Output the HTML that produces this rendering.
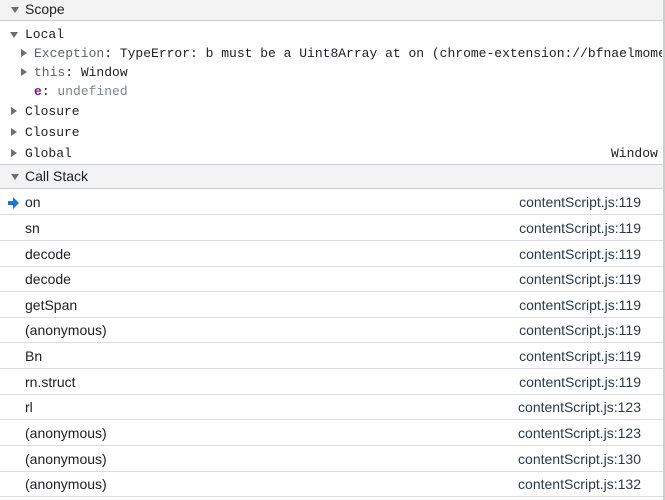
<!DOCTYPE html>
<html><head><style>
body{margin:0;width:665px;height:500px;overflow:hidden;background:#fff;font-family:"Liberation Sans",sans-serif;font-size:14px;color:#202124;position:relative}
.hdr{position:absolute;left:0;width:663px;height:21px;background:#f3f3f3;border-bottom:1px solid #cacdd1;border-top:1px solid #cacdd1;box-sizing:border-box}
.hdr span{position:absolute;left:25px;top:1px;font-size:14px}
.tri{position:absolute;width:0;height:0}
.down{border-left:4px solid transparent;border-right:4px solid transparent;border-top:6px solid #6e6e6e}
.right{border-top:4px solid transparent;border-bottom:4px solid transparent;border-left:6px solid #6e6e6e}
.m{position:absolute;font-family:"Liberation Mono",monospace;font-size:13px;white-space:nowrap}
.row{position:absolute;left:0;width:663px;height:26px;border-bottom:1px solid #dadce0;box-sizing:border-box}
.row .n{position:absolute;left:25px;top:5px}
.row .f{position:absolute;right:22px;top:5px;color:#303942}
.vr{position:absolute;right:0;top:0;width:2px;height:500px;background:#cacdd1}
</style></head><body>
<div class="hdr" style="top:-1px;height:22px"><span style="top:1px">Scope</span><div class="tri down" style="left:11px;top:7px"></div></div>
<div class="tri down" style="left:10px;top:32px"></div><div class="m" style="left:25px;top:27px">Local</div>
<div class="tri right" style="left:21px;top:49px"></div><div class="m" style="left:34px;top:46px;width:628px;overflow:hidden"><span style="color:#5f6368">Exception</span>: TypeError: b must be a Uint8Array at on (chrome-extension://bfnaelmomeimhlpmgjnjophhpkkoljpa/</div>
<div class="tri right" style="left:21px;top:68px"></div><div class="m" style="left:34px;top:65px"><span style="color:#5f6368">this</span>: Window</div>
<div class="m" style="left:34px;top:84px"><span style="color:#881280;font-weight:bold">e</span>: <span style="color:#80868b">undefined</span></div>
<div class="tri right" style="left:11px;top:107px"></div><div class="m" style="left:25px;top:104px">Closure</div>
<div class="tri right" style="left:11px;top:128px"></div><div class="m" style="left:25px;top:125px">Closure</div>
<div class="tri right" style="left:11px;top:149px"></div><div class="m" style="left:25px;top:146px">Global</div>
<div class="m" style="left:611px;top:146px">Window</div>
<div class="hdr" style="top:164px;height:25px"><span style="top:3px">Call Stack</span><div class="tri down" style="left:11px;top:9px"></div></div>
<svg style="position:absolute;left:8px;top:197px" width="12" height="12"><path d="M0 4h5V0l6 6-6 6V8H0z" fill="#1a73e8"/></svg>
<div class="row" style="top:189px"><span class="n">on</span><span class="f">contentScript.js:119</span></div>
<div class="row" style="top:215px"><span class="n">sn</span><span class="f">contentScript.js:119</span></div>
<div class="row" style="top:241px"><span class="n">decode</span><span class="f">contentScript.js:119</span></div>
<div class="row" style="top:266px"><span class="n">decode</span><span class="f">contentScript.js:119</span></div>
<div class="row" style="top:292px"><span class="n">getSpan</span><span class="f">contentScript.js:119</span></div>
<div class="row" style="top:317px"><span class="n">(anonymous)</span><span class="f">contentScript.js:119</span></div>
<div class="row" style="top:343px"><span class="n">Bn</span><span class="f">contentScript.js:119</span></div>
<div class="row" style="top:369px"><span class="n">rn.struct</span><span class="f">contentScript.js:119</span></div>
<div class="row" style="top:394px"><span class="n">rl</span><span class="f">contentScript.js:123</span></div>
<div class="row" style="top:420px"><span class="n">(anonymous)</span><span class="f">contentScript.js:123</span></div>
<div class="row" style="top:446px"><span class="n">(anonymous)</span><span class="f">contentScript.js:130</span></div>
<div class="row" style="top:471px"><span class="n">(anonymous)</span><span class="f">contentScript.js:132</span></div>
<div class="vr"></div>
</body></html>
